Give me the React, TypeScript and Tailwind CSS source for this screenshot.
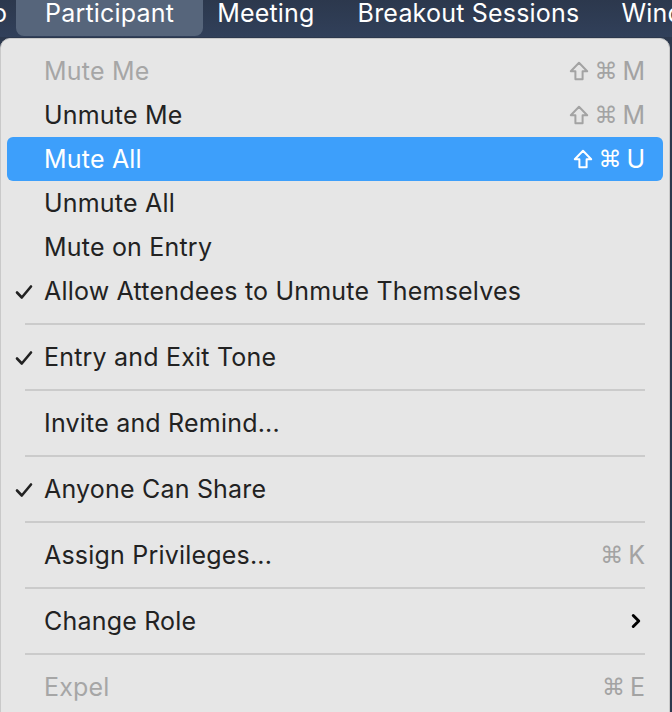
import { ChevronRight } from "lucide-react";

type Item =
  | { kind: "sep" }
  | {
      kind: "item";
      label: string;
      keys?: string[];
      checked?: boolean;
      disabled?: boolean;
      active?: boolean;
      submenu?: boolean;
    };

const items: Item[] = [
  { kind: "item", label: "Mute Me", keys: ["⇧", "⌘", "M"], disabled: true },
  { kind: "item", label: "Unmute Me", keys: ["⇧", "⌘", "M"] },
  { kind: "item", label: "Mute All", keys: ["⇧", "⌘", "U"], active: true },
  { kind: "item", label: "Unmute All" },
  { kind: "item", label: "Mute on Entry" },
  { kind: "item", label: "Allow Attendees to Unmute Themselves", checked: true },
  { kind: "sep" },
  { kind: "item", label: "Entry and Exit Tone", checked: true },
  { kind: "sep" },
  { kind: "item", label: "Invite and Remind..." },
  { kind: "sep" },
  { kind: "item", label: "Anyone Can Share", checked: true },
  { kind: "sep" },
  { kind: "item", label: "Assign Privileges...", keys: ["⌘", "K"] },
  { kind: "sep" },
  { kind: "item", label: "Change Role", submenu: true },
  { kind: "sep" },
  { kind: "item", label: "Expel", keys: ["⌘", "E"], disabled: true },
];

function Check({ className }: { className?: string }) {
  return (
    <svg viewBox="0 0 18 16" className={className} fill="none" aria-hidden>
      <path
        d="M2 8.5 L6.8 13.5 L16 2.5"
        stroke="currentColor"
        strokeWidth="2.6"
        strokeLinecap="round"
        strokeLinejoin="round"
      />
    </svg>
  );
}

/* Shift key: outlined up arrow */
function ShiftIcon({ className }: { className?: string }) {
  return (
    <svg viewBox="0 0 20 20" className={className} fill="none" aria-hidden>
      <path
        d="M10 1.8 L18.2 10.2 H13.6 V18.2 H6.4 V10.2 H1.8 Z"
        stroke="currentColor"
        strokeWidth="2"
        strokeLinejoin="round"
      />
    </svg>
  );
}

function MenuRow({ item }: { item: Extract<Item, { kind: "item" }> }) {
  const text = item.active
    ? "text-white"
    : item.disabled
      ? "text-[#a6a6a6]"
      : "text-[#222222]";
  const keyColor = item.active ? "text-white" : "text-[#a3a3a3]";
  return (
    <div
      className={`relative mx-[6px] flex h-[44px] items-center rounded-[6px] pl-[37px] pr-[18px] ${
        item.active ? "bg-[#3d9ffb]" : ""
      } ${text}`}
    >
      {item.checked && (
        <Check className="absolute left-[8px] top-[15px] h-[16px] w-[18px]" />
      )}
      <span className="flex-1 text-[25px] leading-none tracking-[0.2px]">{item.label}</span>
      {item.keys && (
        <span className={`flex items-center gap-[5px] leading-none ${keyColor}`}>
          {item.keys.map((k, i) =>
            k === "⇧" ? (
              <ShiftIcon key={i} className="ml-[4px] h-[20px] w-[20px]" />
            ) : k === "⌘" ? (
              <span key={i} className="font-['DejaVu_Sans',sans-serif] text-[23px]">
                {k}
              </span>
            ) : (
              <span key={i} className="text-[25px]">
                {k}
              </span>
            ),
          )}
        </span>
      )}
      {item.submenu && (
        <ChevronRight className="-mr-[2px] h-[22px] w-[22px] text-black" strokeWidth={3.2} />
      )}
    </div>
  );
}

export default function App() {
  return (
    <div className="h-[712px] w-[672px] overflow-hidden bg-[#2c384d] font-['Inter','Liberation_Sans',sans-serif]">
      <div className="flex h-[37px] items-start overflow-hidden whitespace-nowrap bg-gradient-to-b from-[#2c384d] to-[#31405a] text-[25px] leading-[26px] tracking-[0.2px] text-white">
        <span className="w-[7px] shrink-0 overflow-hidden">
          <span className="-ml-[8px] inline-block">o</span>
        </span>
        <div className="ml-[9px] flex h-[36px] shrink-0 items-start rounded-b-[8px] bg-[#56657b] pl-[29px] pr-[29px]">
          Participant
        </div>
        <span className="ml-[14px] shrink-0">Meeting</span>
        <span className="ml-[43px] shrink-0">Breakout Sessions</span>
        <span className="ml-[42px] shrink-0">Window</span>
      </div>
      <div className="mr-[2px] mt-[1px] h-[700px] rounded-[10px] border border-[#c9c9c9] bg-[#e6e6e6] pt-[10px]">
        {items.map((it, i) =>
          it.kind === "sep" ? (
            <div key={i} className="flex h-[22px] items-center px-[24px]">
              <div className="h-[2px] w-full bg-[#cbcbcb]" />
            </div>
          ) : (
            <MenuRow key={i} item={it} />
          ),
        )}
      </div>
    </div>
  );
}
